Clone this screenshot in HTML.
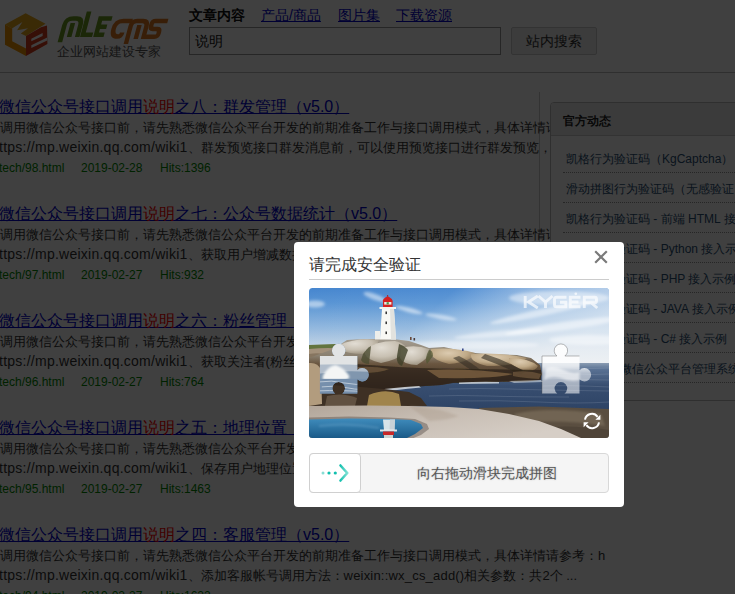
<!DOCTYPE html>
<html><head><meta charset="utf-8">
<style>
*{box-sizing:border-box}
html,body{margin:0;padding:0}
body{width:735px;height:594px;overflow:hidden;position:relative;background:#fff;font-family:"Liberation Sans",sans-serif;color:#333}
.a{position:absolute;white-space:nowrap}
.nav{font-size:14px;line-height:16px;top:7px}
.nav a{color:#00c;text-decoration:underline}
.hr{position:absolute;left:0;top:72px;width:735px;height:1px;background:#bbb}
.t{font-size:16px;line-height:18px;color:#00c;text-decoration:underline;text-underline-offset:1px}
.t b{font-weight:normal;color:#f00}
.d{font-size:13px;line-height:15px;color:#333}
.m{font-size:12px;line-height:15px;color:#080}
.l{font-size:14px;letter-spacing:.25px}
.l2{letter-spacing:.2px}
.side{position:absolute;left:550px;top:102px;width:220px;height:299px;border:1px solid #bbb;border-radius:4px;background:#fff;overflow:hidden}
.side .h{height:33px;background:#ececec;border-bottom:1px solid #ccc;font-size:12px;font-weight:bold;color:#222;padding:11px 0 0 12px;line-height:14px}
.side .l{font-size:12px;letter-spacing:0}
.side .i{position:absolute;left:15px;font-size:12px;line-height:15px;color:#2b4f73;white-space:nowrap}
.side .s{position:absolute;left:12px;width:210px;height:0;border-top:1px dotted #999}
.ov{position:absolute;left:0;top:0;width:735px;height:594px;background:rgba(0,0,0,.75)}
.md{position:absolute;left:294px;top:242px;width:330px;height:265px;background:#fff;border-radius:4px}
</style></head><body>
<!-- header -->
<svg class="a" style="left:0;top:0" width="180" height="64" viewBox="0 0 180 64">
  <polygon points="25.6,13.2 45.5,23.8 26,35.9 20.8,33.4 28.1,28.2 17.1,30.2 22.4,22.1 11.9,28.6 5,24.5" fill="#e8a818"/>
  <polygon points="5,24.5 5,44.7 26,56 26,48.6 12.2,41.3 12.2,28.4" fill="#f09400"/>
  <polygon points="26,35.9 41,27.3 47,25.4 47.4,44 26,56" fill="#d83c1c"/>
  <polygon points="31.3,38.7 42.6,33 42.6,35.9 31.3,41.3" fill="#fff"/>
  <polygon points="31.3,45.3 47.2,37.6 47.2,40.5 31.3,48" fill="#fff"/>
  <g fill="none" stroke-linecap="butt">
   <g transform="translate(0,37) skewX(-15) translate(0,-37)" stroke="#6c9c22" stroke-width="4.6">
    <path d="M61.3,42.3 V25 Q61.3,18.5 68,18.5 H71.5 Q77.2,18.5 77.2,24.5 V37"/>
    <path d="M69.1,23 V37"/>
    <path d="M82.3,11.6 V34.7 H92"/>
    <path d="M107,18.5 H95.5 V34.7 H103.5 M95.5,26.8 H104"/>
   </g>
   <g transform="translate(0,39) skewX(-15) translate(0,-39)" stroke="#e07a20" stroke-width="4.5">
    <path d="M127.5,21 H118 Q110.9,21 110.9,29 Q110.9,36.6 117,36.6 Q120.5,36.6 120.5,32.5"/>
    <path d="M127.2,44 V26 Q127.2,21 132,21 H138 Q143,21 143,26 V39"/>
    <path d="M135.7,25 V39"/>
    <path d="M163,21 H150.5 Q147.6,21 147.6,24.2 V25.8 Q147.6,29 150.5,29 H154.2 Q157.1,29 157.1,32 V33.8 Q157.1,36.7 154.2,36.7 H144"/>
   </g>
  </g>
</svg>
<div class="a" style="left:57px;top:45px;font-size:13px;line-height:14px;color:#555">企业网站建设专家</div>
<div class="a nav" style="left:189px;font-weight:bold;color:#111">文章内容</div>
<div class="a nav" style="left:261px"><a>产品/商品</a></div>
<div class="a nav" style="left:338px"><a>图片集</a></div>
<div class="a nav" style="left:396px"><a>下载资源</a></div>
<div class="a" style="left:189px;top:27px;width:312px;height:28px;border:1px solid #999;font-size:14px;line-height:26px;padding-left:5px;color:#111">说明</div>
<div class="a" style="left:511px;top:27px;width:86px;height:28px;border:1px solid #ccc;border-radius:2px;background:#eee;font-size:14px;line-height:26px;text-align:center;color:#333">站内搜索</div>
<div class="hr"></div>
<div class="a" style="left:539px;top:92px;width:1px;height:360px;background:#ccc"></div>

<div class="a t" style="left:-1px;top:98px">微信公众号接口调用<b>说明</b>之八：群发管理（v5.0）</div>
<div class="a d" style="left:0;top:120px">调用微信公众号接口前，请先熟悉微信公众平台开发的前期准备工作与接口调用模式，具体详情请参考：h</div>
<div class="a d" style="left:-1px;top:140px"><span class="l">ttps://mp.weixin.qq.com/wiki1</span>、群发预览接口群发消息前，可以使用预览接口进行群发预览，可以使用预览接口进行群发预览</div>
<div class="a m" style="left:-1px;top:161px">tech/98.html</div><div class="a m" style="left:81px;top:161px">2019-02-28</div><div class="a m" style="left:160px;top:161px">Hits:1396</div>
<div class="a t" style="left:-1px;top:205px">微信公众号接口调用<b>说明</b>之七：公众号数据统计（v5.0）</div>
<div class="a d" style="left:0;top:227px">调用微信公众号接口前，请先熟悉微信公众平台开发的前期准备工作与接口调用模式，具体详情请参考：h</div>
<div class="a d" style="left:-1px;top:247px"><span class="l">ttps://mp.weixin.qq.com/wiki1</span>、获取用户增减数据接口调用方法：<span class="l2">weixin::wx_get_user_summary()</span>相关参数</div>
<div class="a m" style="left:-1px;top:268px">tech/97.html</div><div class="a m" style="left:81px;top:268px">2019-02-27</div><div class="a m" style="left:160px;top:268px">Hits:932</div>
<div class="a t" style="left:-1px;top:312px">微信公众号接口调用<b>说明</b>之六：粉丝管理（v5.0）</div>
<div class="a d" style="left:0;top:334px">调用微信公众号接口前，请先熟悉微信公众平台开发的前期准备工作与接口调用模式，具体详情请参考：h</div>
<div class="a d" style="left:-1px;top:354px"><span class="l">ttps://mp.weixin.qq.com/wiki1</span>、获取关注者(粉丝)列表接口调用方法：<span class="l2">weixin::wx_get_user_list()</span>相关参数</div>
<div class="a m" style="left:-1px;top:375px">tech/96.html</div><div class="a m" style="left:81px;top:375px">2019-02-27</div><div class="a m" style="left:160px;top:375px">Hits:764</div>
<div class="a t" style="left:-1px;top:419px">微信公众号接口调用<b>说明</b>之五：地理位置（v5.0）</div>
<div class="a d" style="left:0;top:441px">调用微信公众号接口前，请先熟悉微信公众平台开发的前期准备工作与接口调用模式，具体详情请参考：h</div>
<div class="a d" style="left:-1px;top:461px"><span class="l">ttps://mp.weixin.qq.com/wiki1</span>、保存用户地理位置接口调用方法：<span class="l2">weixin::wx_save_location()</span>相关参数</div>
<div class="a m" style="left:-1px;top:482px">tech/95.html</div><div class="a m" style="left:81px;top:482px">2019-02-27</div><div class="a m" style="left:160px;top:482px">Hits:1463</div>
<div class="a t" style="left:-1px;top:526px">微信公众号接口调用<b>说明</b>之四：客服管理（v5.0）</div>
<div class="a d" style="left:0;top:548px">调用微信公众号接口前，请先熟悉微信公众平台开发的前期准备工作与接口调用模式，具体详情请参考：h</div>
<div class="a d" style="left:-1px;top:568px"><span class="l">ttps://mp.weixin.qq.com/wiki1</span>、添加客服帐号调用方法：<span class="l2">weixin::wx_cs_add()</span>相关参数：共2个 ...</div>
<div class="a m" style="left:-1px;top:589px">tech/94.html</div><div class="a m" style="left:81px;top:589px">2019-02-27</div><div class="a m" style="left:160px;top:589px">Hits:1622</div>

<div class="side">
  <div class="h">官方动态</div>
<div class="i" style="top:49px">凯格行为验证码（<span class="l">KgCaptcha</span>）</div>
<div class="s" style="top:69px"></div>
<div class="i" style="top:79px">滑动拼图行为验证码（无感验证）</div>
<div class="s" style="top:99px"></div>
<div class="i" style="top:109px">凯格行为验证码 - 前端 <span class="l">HTML</span> 接入示例</div>
<div class="s" style="top:129px"></div>
<div class="i" style="top:139px">凯格行为验证码 - <span class="l">Python</span> 接入示例</div>
<div class="s" style="top:159px"></div>
<div class="i" style="top:169px">凯格行为验证码 - <span class="l">PHP</span> 接入示例</div>
<div class="s" style="top:189px"></div>
<div class="i" style="top:199px">凯格行为验证码 - <span class="l">JAVA</span> 接入示例</div>
<div class="s" style="top:219px"></div>
<div class="i" style="top:229px">凯格行为验证码 - <span class="l">C#</span> 接入示例</div>
<div class="s" style="top:249px"></div>
<div class="i" style="top:259px">凯格官方 微信公众平台管理系统</div>
<div class="s" style="top:279px"></div>
</div>

<div class="ov"></div>
<div class="md">
  <div class="a" style="left:15px;top:14px;font-size:16px;line-height:18px;color:#333">请完成安全验证</div>
  <div class="a" style="left:15px;top:37px;width:300px;height:1px;background:#ccc"></div>
<svg class="a" style="left:15px;top:46px" width="300" height="150" viewBox="0 0 300 150">
<defs>
  <clipPath id="cp"><rect width="300" height="150" rx="3.5"/></clipPath>
  <linearGradient id="sky" x1="0" y1="0" x2="0" y2="1">
    <stop offset="0" stop-color="#4686cf"/>
    <stop offset="0.1" stop-color="#5894d4"/>
    <stop offset="0.27" stop-color="#92b8de"/>
    <stop offset="0.4" stop-color="#c4d4e4"/>
    <stop offset="0.5" stop-color="#dce2e8"/>
    <stop offset="1" stop-color="#dce2e8"/>
  </linearGradient>
  <linearGradient id="skyr" x1="0" y1="0" x2="1" y2="0.3">
    <stop offset="0" stop-color="#fff" stop-opacity="0"/>
    <stop offset="0.45" stop-color="#fff" stop-opacity="0.05"/>
    <stop offset="0.7" stop-color="#f4f6f8" stop-opacity="0.45"/>
    <stop offset="1" stop-color="#f4f6f8" stop-opacity="0.7"/>
  </linearGradient>
  <linearGradient id="sea" x1="0" y1="0" x2="0" y2="1">
    <stop offset="0" stop-color="#8a9cb2"/>
    <stop offset="0.12" stop-color="#5a7294"/>
    <stop offset="0.45" stop-color="#384e70"/>
    <stop offset="1" stop-color="#2c4264"/>
  </linearGradient>
  <linearGradient id="pzg" x1="0" y1="0" x2="0" y2="1">
    <stop offset="0" stop-color="#fff" stop-opacity="0.9"/>
    <stop offset="0.45" stop-color="#fff" stop-opacity="0.8"/>
    <stop offset="0.6" stop-color="#fff" stop-opacity="0.55"/>
    <stop offset="1" stop-color="#fff" stop-opacity="0.55"/>
  </linearGradient>
  <linearGradient id="rock" x1="0" y1="0" x2="0" y2="1">
    <stop offset="0" stop-color="#a49c90"/>
    <stop offset="0.3" stop-color="#8a8070"/>
    <stop offset="0.45" stop-color="#6a5640"/>
    <stop offset="0.7" stop-color="#4a3a2a"/>
    <stop offset="1" stop-color="#30261c"/>
  </linearGradient>
  <radialGradient id="bld" cx="0.4" cy="0.3" r="0.7">
    <stop offset="0" stop-color="#e2ddd4"/>
    <stop offset="0.6" stop-color="#c8c0b2"/>
    <stop offset="1" stop-color="#a09684"/>
  </radialGradient>
  <radialGradient id="bldt" cx="0.4" cy="0.3" r="0.7">
    <stop offset="0" stop-color="#dccbb0"/>
    <stop offset="0.6" stop-color="#c0aa88"/>
    <stop offset="1" stop-color="#907858"/>
  </radialGradient>
  <linearGradient id="slab" x1="0" y1="0" x2="1" y2="0.6">
    <stop offset="0" stop-color="#b2a69a"/>
    <stop offset="0.5" stop-color="#c8beb4"/>
    <stop offset="1" stop-color="#d6cec6"/>
  </linearGradient>
  <linearGradient id="pool" x1="0" y1="0" x2="0" y2="1">
    <stop offset="0" stop-color="#3f8cbc"/>
    <stop offset="1" stop-color="#1a5a88"/>
  </linearGradient>
  <filter id="bl" x="-30%" y="-100%" width="160%" height="300%"><feGaussianBlur stdDeviation="1.6"/></filter>
  <filter id="bl1" x="-10%" y="-50%" width="120%" height="200%"><feGaussianBlur stdDeviation="0.8"/></filter>
  <filter id="bl2" x="-10%" y="-50%" width="120%" height="200%"><feGaussianBlur stdDeviation="0.5"/></filter>
  <path id="pzs" d="M0,0 L14.9,0 A6.7,6.7 0 1 1 22.9,0 L37.5,0 L37.5,14.3 A6.7,6.7 0 1 1 37.5,23.3 L37.5,37.5 L22.5,37.5 A6.3,6.3 0 1 0 15.3,37.5 L0,37.5 Z"/>
</defs>
<g clip-path="url(#cp)">
  <rect width="300" height="150" fill="url(#sky)"/>
  <rect width="300" height="80" fill="url(#skyr)"/>
  <g filter="url(#bl)" fill="#fff">
    <ellipse cx="6" cy="16" rx="10" ry="3.5" opacity="0.5"/>
    <ellipse cx="66" cy="9" rx="12" ry="3" opacity="0.5" transform="rotate(20 66 9)"/>
    <ellipse cx="100" cy="22" rx="14" ry="2.2" opacity="0.55" transform="rotate(14 100 22)"/>
    <ellipse cx="132" cy="29" rx="16" ry="2.2" opacity="0.5" transform="rotate(10 132 29)"/>
    <ellipse cx="250" cy="10" rx="50" ry="7" opacity="0.45"/>
    <ellipse cx="235" cy="24" rx="55" ry="3.5" opacity="0.5" transform="rotate(-12 235 24)"/>
    <ellipse cx="255" cy="38" rx="60" ry="4" opacity="0.5" transform="rotate(-8 255 38)"/>
    <ellipse cx="190" cy="46" rx="45" ry="3" opacity="0.45" transform="rotate(-5 190 46)"/>
    <ellipse cx="280" cy="52" rx="40" ry="5" opacity="0.45"/>
    <ellipse cx="160" cy="57" rx="70" ry="4" opacity="0.4"/>
  </g>
  <!-- sea -->
  <rect x="0" y="75" width="300" height="50" fill="url(#sea)"/>
  <g stroke="#b0bccc" stroke-width="0.7" opacity="0.28" fill="none">
    <path d="M236,80 Q250,79 262,80 T300,80 M240,86 Q255,85 270,86 T300,86 M236,91 Q250,90 266,91 T300,92 M234,98 Q260,97 300,99 M140,101 Q170,100 200,101 T300,103 M120,108 Q150,107 180,108 T260,109 M150,113 Q190,112 230,114 T300,114"/>
  </g>
  <!-- left vegetation / rocks -->
  <polygon points="0,57 26,56 36,58 36,75 0,75" fill="#63743e"/>
  <path d="M0,61 Q20,59 36,61 L44,78 L0,80 Z" fill="#a2907a"/>
  <path d="M0,66 Q10,64 20,67 L24,74 L0,75 Z" fill="#7a6a56" opacity="0.7"/>
  <!-- main rock -->
  <path d="M24,61 L32,56 L38,52 L55,51 L75,51 L88,51.5 L100,53 L112,57 L120,60 L135,59 L157,64 L176,66 L208,67 L222,70 L231,77 L233,86 L231,92 L218,93.5 L176,94 L144,94.7 L132,97 L100,99 L60,103 L0,106 L0,70 Z" fill="url(#rock)"/>
  <g filter="url(#bl2)">
    <path d="M30,57 Q48,49 70,52 Q68,60 54,66 Q38,66 30,61 Z" fill="url(#bld)"/>
    <path d="M56,62 Q66,53 86,53 Q99,56 97,64 Q88,72 72,75 Q58,72 56,66 Z" fill="url(#bld)"/>
    <path d="M92,60 Q106,56 120,61 Q121,70 108,77 Q95,77 91,70 Z" fill="url(#bld)"/>
    <path d="M122,61 Q146,59 166,65 Q162,74 140,76 Q124,72 122,66 Z" fill="url(#bldt)"/>
    <path d="M162,66 Q192,64 218,70 Q210,78 178,78 Q162,74 162,68 Z" fill="url(#bldt)"/>
    <path d="M200,70 Q220,70 229,78 Q226,84 214,82 Q204,78 200,74 Z" fill="url(#bldt)"/>
    <path d="M54,66 Q58,60 62,58 L60,76 Q54,76 52,72 Z" fill="#4a4a30" opacity="0.8"/>
    <path d="M90,56 Q96,58 99,62 L93,78 Q87,76 88,68 Z" fill="#3e4028" opacity="0.8"/>
    <path d="M120,62 Q124,62 124,68 L118,76 Q116,72 118,66 Z" fill="#4e5430" opacity="0.7"/>
    <path d="M176,66 Q196,72 216,84 L212,87 Q194,78 172,70 Z" fill="#2e2a20" opacity="0.6"/>
    <path d="M150,68 Q162,74 174,84 L168,86 Q156,78 144,70 Z" fill="#2e2a20" opacity="0.55"/>
    <path d="M22,74 Q70,78 110,80 Q160,81 232,82 L232,92 L176,94 L144,95 L132,97 L100,99 L60,103 L20,100 Z" fill="#2e2418" opacity="0.75"/>
    <path d="M40,80 Q60,77 80,81 Q72,85 52,85 Z" fill="#8a6c48" opacity="0.5"/>
    <path d="M118,82 Q160,80 204,86 Q184,91 130,90 Z" fill="#94724c" opacity="0.6"/>
    <path d="M204,84 Q220,82 232,86 L230,91 Q214,90 204,88 Z" fill="#8a6c4a" opacity="0.5"/>
  </g>
  <!-- surf -->
  <g filter="url(#bl2)" fill="#eef2f4">
    <path d="M150,94.5 Q170,93.5 190,94 L190,95.5 Q170,95.5 150,96 Z" opacity="0.7"/>
    <path d="M60,103 Q80,100 110,98 L112,99.5 Q85,102 62,105 Z" opacity="0.75"/>
    <path d="M200,93 L232,92 L234,94 L205,95 Z" opacity="0.5"/>
  </g>
  <!-- dark rocks lower left -->
  <path d="M0,96 L40,98 L75,101 L100,104 L112,110 L118,118 L0,120 Z" fill="#3e3024"/>
  <path d="M60,107 Q76,100 90,106 L92,118 L58,118 Z" fill="#a0844c"/>
  <path d="M18,108 Q34,104 48,110 L46,118 L16,118 Z" fill="#6a5a48" opacity="0.8"/>
  <!-- left tall rock -->
  <path d="M0,75 Q9,74 12,82 L13,116 L0,118 Z" fill="#b29c7e"/>
  <!-- right dark rocks -->
  <path d="M170,120 L230,118.5 L300,121 L300,150 L180,150 Z" fill="#5a4e40"/>
  <path d="M205,126 Q240,118 292,126 L296,138 Q250,131 214,135 Z" fill="#7c6e5c" opacity="0.7" filter="url(#bl1)"/>
  <path d="M230,140 Q260,136 300,142 L300,150 L240,150 Z" fill="#4a4034" opacity="0.7"/>
  <!-- foreground slab -->
  <path d="M0,118 L60,117.5 L100,118 L140,119 L170,121 L200,126 L230,133 L252,141 L272,150 L0,150 Z" fill="url(#slab)"/>
  <path d="M100,118 Q130,120 150,128 Q140,132 120,133 Z" fill="#a89888" opacity="0.35" filter="url(#bl1)"/>
  <!-- pool -->
  <path d="M0,129.5 L40,128.5 L80,129.5 L106,131 L118,136 L120,141 L112,147 L102,151 L0,151 Z" fill="#5a5048" opacity="0.45" filter="url(#bl2)"/>
  <path d="M0,131.5 L40,130.5 L80,131 L102,132 L112,136 L114,140 L106,146 L98,150 L0,150 Z" fill="url(#pool)"/>
  <path d="M10,138 Q40,134 70,140" stroke="#7ab0d4" stroke-width="2" fill="none" opacity="0.35" filter="url(#bl1)"/>
  <!-- reflection -->
  <path d="M74,131.5 H86 L85.5,142 H75 Z" fill="#e6ecee" opacity="0.92"/>
  <path d="M81,131.5 H86 L85.5,142 H80.5 Z" fill="#c4ccd2" opacity="0.8"/>
  <rect x="71" y="141.5" width="17" height="2" fill="#f0f2f2" opacity="0.9"/>
  <rect x="74" y="143.5" width="11" height="3.5" fill="#c82828"/>
  <rect x="75" y="147" width="9" height="3" fill="#dfe0d8" opacity="0.9"/>
  <!-- lighthouse -->
  <path d="M73.6,13.2 L74.5,11 L77,9 L78.6,8.3 L80.2,9 L82.8,11 L83.8,13.2 Z" fill="#d42020"/>
  <rect x="78.1" y="7" width="1" height="1.6" fill="#b02020"/>
  <rect x="74" y="13" width="9.6" height="6.2" fill="#d42222"/>
  <rect x="75.2" y="14" width="7.2" height="2.6" fill="#ecece6"/>
  <rect x="77.6" y="14.2" width="2.2" height="2.2" fill="#4a9a48"/>
  <rect x="70.5" y="19" width="16.5" height="2" fill="#f4f4f0"/>
  <path d="M73,21 L85,21 L87,51.5 L71,51.5 Z" fill="#f8f8f4"/>
  <path d="M81,21 L85,21 L87,51.5 L82,51.5 Z" fill="#e2e2de"/>
  <rect x="66" y="43" width="5" height="8.5" fill="#eeeeea"/>
  <rect x="76.5" y="23.5" width="1.4" height="2.6" fill="#222"/>
  <rect x="76.5" y="33.5" width="1.4" height="2.6" fill="#222"/>
  <rect x="76.5" y="43.5" width="1.4" height="2.6" fill="#222"/>
  <rect x="101" y="49" width="1.6" height="3" fill="#6a4a3a"/>
  <rect x="104.5" y="50" width="1.6" height="2.5" fill="#4a3a3a"/>
  <rect x="153" y="60.5" width="1.6" height="2.5" fill="#3a4a8a"/>
  <!-- watermark -->
  <g fill="none" stroke="#fff" stroke-width="2.9" opacity="0.68">
    <path d="M216.2,8 V20 M228.8,8 L219.5,14 L228.8,20"/>
    <path d="M229.5,8 L236.5,14 L243.5,8 M236.5,14 V20"/>
    <path d="M257.5,9.25 H247.5 Q245.5,9.25 245.5,11.3 V16.7 Q245.5,18.75 247.5,18.75 H256.8 V14.3 H251"/>
    <path d="M271.5,9.25 H261.3 V18.75 H271.5 M261.3,14 H269.5"/>
    <path d="M275.3,20 V9.25 H285.8 Q287.5,9.25 287.5,11.2 V12.8 Q287.5,14.7 285.8,14.7 H275.3 M282,14.7 L288.3,20"/>
  </g>
  <circle cx="266.8" cy="5.8" r="1.4" fill="#fff" opacity="0.68"/>
  <!-- target piece -->
  <g transform="translate(233,68)">
    <path d="M4,12 Q12,9 22,14 Q30,18 37.5,16 L37.5,24 Q28,26 18,22 Q8,20 2,24 Z" fill="#fff" opacity="0.6" filter="url(#bl1)"/>
    <use href="#pzs" fill="url(#pzg)"/>
    <path d="M0,37.5 V0 H14.9 A6.7,6.7 0 1 1 22.9,0 H37.5" fill="none" stroke="#555" stroke-opacity="0.45" stroke-width="0.9"/>
  </g>
  <!-- left piece (drag) -->
  <g transform="translate(10.8,67.9)">
    <clipPath id="pc"><use href="#pzs"/></clipPath>
    <g clip-path="url(#pc)">
      <rect x="-8" y="-14" width="60" height="60" fill="#6a84a0"/>
      <rect x="-8" y="-14" width="60" height="23" fill="#dcdfe0"/>
      <path d="M-2,9 Q20,8 52,10 L52,16 Q20,14 -2,18 Z" fill="#a4b2c2"/>
      <path d="M3,20 Q8,10 16,9 Q24,12 28,18 Q32,22 26,24 Q12,25 3,24 Z" fill="#f2f4f4" filter="url(#bl1)"/>
      <rect x="-8" y="23" width="60" height="23" fill="#5e7c9e"/>
      <path d="M0,26 Q12,24 24,27 T50,27 M2,31 Q14,29 28,32 T50,32 M-2,35 Q20,34 50,36" stroke="#c4d0dc" stroke-width="1" fill="none" opacity="0.8"/>
    </g>
    <use href="#pzs" fill="#fff" fill-opacity="0.15"/>
  </g>
  <!-- refresh icon -->
  <g transform="translate(283,133)">
    <path d="M-7,-1.3 A7,7 0 0 1 5.6,-4.2 M7,1.3 A7,7 0 0 1 -5.6,4.2" fill="none" stroke="#fff" stroke-width="2"/>
    <path d="M3.4,-1.2 L8.4,-1.2 L8.4,-6.3 Z M-3.4,1.2 L-8.4,1.2 L-8.4,6.3 Z" fill="#fff"/>
  </g>
</g>
</svg>

  <svg class="a" style="left:299px;top:7px" width="16" height="16" viewBox="0 0 16 16"><path d="M2.2,2.2 L13.8,13.8 M13.8,2.2 L2.2,13.8" stroke="#7a7a7a" stroke-width="2.2"/></svg>
  <div class="a" style="left:15px;top:211px;width:300px;height:40px;border:1px solid #d8d8d8;border-radius:4px;background:#f5f5f5"></div>
  <div class="a" style="left:15px;top:211px;width:52px;height:40px;border:1px solid #d0d0d0;border-radius:4px;background:#fff"></div>
  <svg class="a" style="left:27px;top:221px" width="30" height="20" viewBox="0 0 30 20">
    <defs><linearGradient id="ag" x1="0" x2="1"><stop offset="0" stop-color="#19c2b0"/><stop offset="1" stop-color="#7ee0d4"/></linearGradient></defs>
    <circle cx="2" cy="10" r="1.5" fill="#88ddd4"/><circle cx="8" cy="10" r="1.6" fill="#10bfae"/><circle cx="14.3" cy="10" r="1.6" fill="#10bfae"/>
    <path d="M19.5,2.5 L26.3,10 L19.5,17.5" fill="none" stroke="url(#ag)" stroke-width="2.6" stroke-linecap="round" stroke-linejoin="round"/>
  </svg>
  <div class="a" style="left:123px;top:223px;font-size:14px;line-height:16px;color:#555;text-shadow:0 0 2px rgba(0,0,0,.25)">向右拖动滑块完成拼图</div>
</div>
</body></html>
